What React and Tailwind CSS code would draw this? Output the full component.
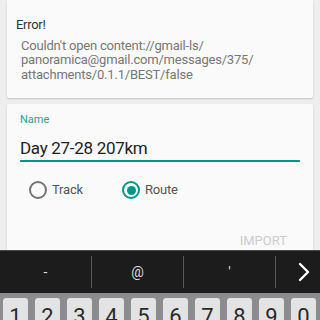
import { ChevronRight } from 'lucide-react';

const digits = ['1', '2', '3', '4', '5', '6', '7', '8', '9', '0'];

function Radio({ label, checked, width }) {
  return (
    <div className={`flex items-center ${width}`}>
      {checked ? (
        <span className="flex h-[18px] w-[18px] items-center justify-center rounded-full border-2 border-[#009688]">
          <span className="h-[9px] w-[9px] rounded-full bg-[#009688]" />
        </span>
      ) : (
        <span className="h-[18px] w-[18px] rounded-full border-2 border-[#757575]" />
      )}
      <span className="ml-[5px] text-[13px] leading-[18px] tracking-[-0.2px] text-[#555]">{label}</span>
    </div>
  );
}

export default function App() {
  return (
    <div
      className="flex h-[320px] w-[320px] flex-col overflow-hidden bg-[#eeeeee]"
      style={{ fontFamily: 'Roboto, "Noto Sans", sans-serif' }}
    >
      {/* Error card */}
      <div className="mx-[7px] h-[98px] shrink-0 rounded-b-[2px] bg-[#fafafa] pt-[17px] shadow-[0_1px_2px_rgba(0,0,0,0.18)]">
        <div className="pl-[9px] text-[13px] leading-[16px] tracking-[-0.3px] text-[#333]">Error!</div>
        <div className="mt-[6px] pl-[14px] text-[13px] leading-[14.3px] tracking-[-0.2px] text-[#777]">
          <div>Couldn't open content://gmail-ls/</div>
          <div>panoramica@gmail.com/messages/375/</div>
          <div>attachments/0.1.1/BEST/false</div>
        </div>
      </div>

      {/* Import form card */}
      <div className="mx-[7px] mt-[6px] flex flex-1 flex-col rounded-t-[2px] bg-[#fafafa] px-[13px] pt-[9px] shadow-[0_1px_2px_rgba(0,0,0,0.18)]">
        <div className="text-[11px] leading-[13px] text-[#1fa293]">Name</div>
        <div className="mt-[10px] border-b-2 border-[#009688] text-[17px] leading-[24px] tracking-[-0.3px] text-[#222]">
          Day 27-28 207km
        </div>
        <div className="mt-[19px] flex pl-[9px]">
          <Radio label="Track" width="w-[93px]" />
          <Radio label="Route" checked />
        </div>
        <div className="mt-[34px] flex justify-end pr-[13px]">
          <span className="text-[13px] leading-[15px] text-[#cccccc]">IMPORT</span>
        </div>
      </div>

      {/* Keyboard */}
      <div className="h-[70px] shrink-0 border-t border-[#4a4a4a]">
        <div className="flex h-[42px] items-center bg-[#1c1c1c] text-[14px] text-[#dddddd]">
          <div className="flex h-[32px] w-[92px] items-center justify-center border-r border-[#5a5a5a]">-</div>
          <div className="flex h-[32px] w-[92px] items-center justify-center border-r border-[#5a5a5a]">@</div>
          <div className="flex h-[32px] w-[92px] items-center justify-center border-r border-[#5a5a5a]">'</div>
          <div className="flex flex-1 items-center justify-end">
            <ChevronRight size={32} strokeWidth={1.8} className="text-white" />
          </div>
        </div>
        <div className="flex h-[28px] gap-[7px] bg-[#8a8c8f] px-[3px] pt-[5px]">
          {digits.map((d) => (
            <div
              key={d}
              className="flex h-[30px] w-[25px] justify-center rounded-t-[3px] bg-[#e3e3e3] pt-[6px] text-[22px] leading-[26px] text-[#2a2a2a]"
            >
              {d}
            </div>
          ))}
        </div>
      </div>
    </div>
  );
}
